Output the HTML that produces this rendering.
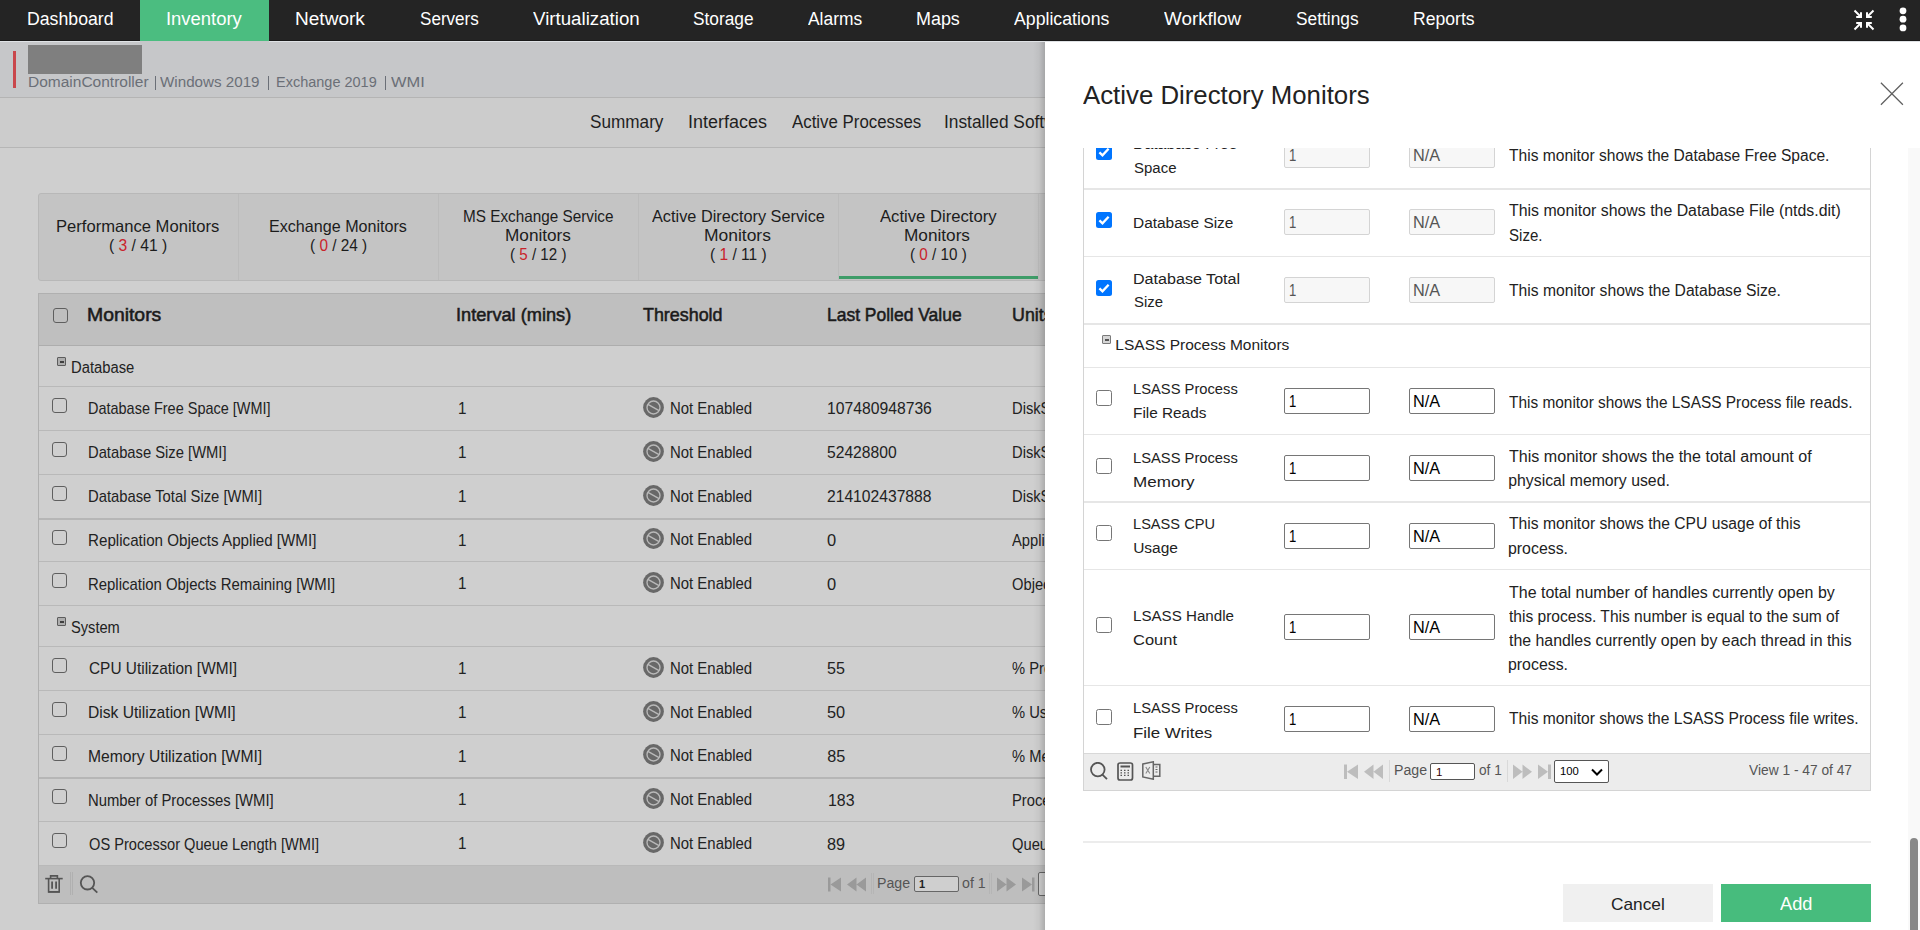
<!DOCTYPE html>
<html><head><meta charset="utf-8">
<style>
*{box-sizing:border-box;}
html,body{margin:0;padding:0;}
body{width:1920px;height:930px;overflow:hidden;position:relative;font-family:"Liberation Sans",sans-serif;background:#cfcfcf;}
.a{position:absolute;white-space:nowrap;}
</style></head><body>
<div class="a" style="left:0px;top:0px;width:1920px;height:41px;background:#242424"></div>
<div class="a" style="left:0px;top:40px;width:1920px;height:1px;background:#1a1a1a"></div>
<div class="a" style="left:140px;top:0px;width:129px;height:42px;background:#4bbd80"></div>
<div class="a" style="left:26.58px;top:8px;font-size:17.600px;line-height:23px;color:#fff;transform:scaleX(1.0058);transform-origin:0 0;">Dashboard</div>
<div class="a" style="left:166.34px;top:8px;font-size:17.600px;line-height:23px;color:#fff;transform:scaleX(1.0474);transform-origin:0 0;">Inventory</div>
<div class="a" style="left:295.48px;top:8px;font-size:17.600px;line-height:23px;color:#fff;transform:scaleX(1.0826);transform-origin:0 0;">Network</div>
<div class="a" style="left:419.63px;top:8px;font-size:17.600px;line-height:23px;color:#fff;transform:scaleX(0.9709);transform-origin:0 0;">Servers</div>
<div class="a" style="left:532.81px;top:8px;font-size:17.600px;line-height:23px;color:#fff;transform:scaleX(1.0628);transform-origin:0 0;">Virtualization</div>
<div class="a" style="left:692.72px;top:8px;font-size:17.600px;line-height:23px;color:#fff;transform:scaleX(0.9831);transform-origin:0 0;">Storage</div>
<div class="a" style="left:807.50px;top:8px;font-size:17.600px;line-height:23px;color:#fff;transform:scaleX(0.9885);transform-origin:0 0;">Alarms</div>
<div class="a" style="left:915.57px;top:8px;font-size:17.600px;line-height:23px;color:#fff;transform:scaleX(1.0181);transform-origin:0 0;">Maps</div>
<div class="a" style="left:1014.00px;top:8px;font-size:17.600px;line-height:23px;color:#fff;transform:scaleX(1.0053);transform-origin:0 0;">Applications</div>
<div class="a" style="left:1164.31px;top:8px;font-size:17.600px;line-height:23px;color:#fff;transform:scaleX(1.0711);transform-origin:0 0;">Workflow</div>
<div class="a" style="left:1295.92px;top:8px;font-size:17.600px;line-height:23px;color:#fff;transform:scaleX(0.9853);transform-origin:0 0;">Settings</div>
<div class="a" style="left:1412.99px;top:8px;font-size:17.600px;line-height:23px;color:#fff;">Reports</div>
<svg class="a" style="left:1852px;top:8px" width="24" height="24" viewBox="0 0 24 24" fill="none" stroke="#fff" stroke-width="2">
<path d="M2.5 2.5 L9 9 M9 4.2 V9 H4.2"/><path d="M21.5 2.5 L15 9 M15 4.2 V9 H19.8"/>
<path d="M2.5 21.5 L9 15 M9 19.8 V15 H4.2"/><path d="M21.5 21.5 L15 15 M15 19.8 V15 H19.8"/></svg>
<svg class="a" style="left:1897px;top:6px" width="12" height="28" viewBox="0 0 12 28" fill="#fff"><circle cx="6" cy="4.8" r="3.4"/><circle cx="6" cy="13.2" r="3.4"/><circle cx="6" cy="21.9" r="3.4"/></svg>
<div class="a" style="left:0px;top:41px;width:1920px;height:57px;background:#c6c7c9"></div>
<div class="a" style="left:0px;top:97px;width:1920px;height:1px;background:#b4b4b4"></div>
<div class="a" style="left:13px;top:51px;width:3px;height:37px;background:#c9474c"></div>
<div class="a" style="left:28px;top:45px;width:114px;height:29px;background:#7f7f7f"></div>
<div class="a" style="left:27.96px;top:73px;font-size:14.700px;line-height:19px;color:#6b6f77;transform:scaleX(1.0552);transform-origin:0 0;">DomainController</div>
<div class="a" style="left:155px;top:76px;width:1px;height:14px;background:#6b6f77"></div>
<div class="a" style="left:159.92px;top:73px;font-size:14.700px;line-height:19px;color:#6b6f77;transform:scaleX(1.0335);transform-origin:0 0;">Windows 2019</div>
<div class="a" style="left:268px;top:76px;width:1px;height:14px;background:#6b6f77"></div>
<div class="a" style="left:275.84px;top:73px;font-size:14.700px;line-height:19px;color:#6b6f77;transform:scaleX(0.9868);transform-origin:0 0;">Exchange 2019</div>
<div class="a" style="left:385px;top:76px;width:1px;height:14px;background:#6b6f77"></div>
<div class="a" style="left:390.72px;top:73px;font-size:14.700px;line-height:19px;color:#6b6f77;transform:scaleX(1.1204);transform-origin:0 0;">WMI</div>
<div class="a" style="left:0px;top:98px;width:1920px;height:49px;background:#cccccc"></div>
<div class="a" style="left:0px;top:147px;width:1920px;height:1px;background:#b6b6b6"></div>
<div class="a" style="left:590.23px;top:111px;font-size:17.500px;line-height:23px;color:#1f1f1f;transform:scaleX(0.9809);transform-origin:0 0;">Summary</div>
<div class="a" style="left:687.78px;top:111px;font-size:17.500px;line-height:23px;color:#1f1f1f;transform:scaleX(1.0263);transform-origin:0 0;">Interfaces</div>
<div class="a" style="left:791.70px;top:111px;font-size:17.500px;line-height:23px;color:#1f1f1f;transform:scaleX(0.9625);transform-origin:0 0;">Active Processes</div>
<div class="a" style="left:944.44px;top:111px;font-size:17.500px;line-height:23px;color:#1f1f1f;transform:scaleX(0.9901);transform-origin:0 0;">Installed Software</div>
<div class="a" style="left:38px;top:193px;width:1100px;height:88px;background:#c4c4c4;border:1px solid #b8b8b8;border-radius:3px"></div>
<div class="a" style="left:238px;top:194px;width:1px;height:86px;background:#bcbcbc"></div>
<div class="a" style="left:438px;top:194px;width:1px;height:86px;background:#bcbcbc"></div>
<div class="a" style="left:638px;top:194px;width:1px;height:86px;background:#bcbcbc"></div>
<div class="a" style="left:838px;top:194px;width:1px;height:86px;background:#bcbcbc"></div>
<div class="a" style="left:1038px;top:194px;width:1px;height:86px;background:#bcbcbc"></div>
<div class="a" style="left:56.07px;top:216px;font-size:16.500px;line-height:21px;color:#1c1c1c;transform:scaleX(1.0057);transform-origin:0 0;">Performance Monitors</div>
<div class="a" style="left:108.66px;top:235px;font-size:16.500px;line-height:21px;color:#1c1c1c;transform:scaleX(0.9461);transform-origin:0 0;">( <span style="color:#c9232b">3</span> / 41 )</div>
<div class="a" style="left:268.91px;top:216px;font-size:16.500px;line-height:21px;color:#1c1c1c;transform:scaleX(0.9764);transform-origin:0 0;">Exchange Monitors</div>
<div class="a" style="left:309.88px;top:235px;font-size:16.500px;line-height:21px;color:#1c1c1c;transform:scaleX(0.9293);transform-origin:0 0;">( <span style="color:#c9232b">0</span> / 24 )</div>
<div class="a" style="left:462.78px;top:206px;font-size:16.500px;line-height:21px;color:#1c1c1c;transform:scaleX(0.9269);transform-origin:0 0;">MS Exchange Service</div>
<div class="a" style="left:504.87px;top:225px;font-size:16.500px;line-height:21px;color:#1c1c1c;transform:scaleX(1.0419);transform-origin:0 0;">Monitors</div>
<div class="a" style="left:509.89px;top:244px;font-size:16.500px;line-height:21px;color:#1c1c1c;transform:scaleX(0.9192);transform-origin:0 0;">( <span style="color:#c9232b">5</span> / 12 )</div>
<div class="a" style="left:651.50px;top:206px;font-size:16.500px;line-height:21px;color:#1c1c1c;transform:scaleX(0.9874);transform-origin:0 0;">Active Directory Service</div>
<div class="a" style="left:704.20px;top:225px;font-size:16.500px;line-height:21px;color:#1c1c1c;transform:scaleX(1.0573);transform-origin:0 0;">Monitors</div>
<div class="a" style="left:709.57px;top:244px;font-size:16.500px;line-height:21px;color:#1c1c1c;transform:scaleX(0.9422);transform-origin:0 0;">( <span style="color:#c9232b">1</span> / 11 )</div>
<div class="a" style="left:879.50px;top:206px;font-size:16.500px;line-height:21px;color:#1c1c1c;transform:scaleX(1.0087);transform-origin:0 0;">Active Directory</div>
<div class="a" style="left:904.32px;top:225px;font-size:16.500px;line-height:21px;color:#1c1c1c;transform:scaleX(1.0427);transform-origin:0 0;">Monitors</div>
<div class="a" style="left:909.69px;top:244px;font-size:16.500px;line-height:21px;color:#1c1c1c;transform:scaleX(0.9226);transform-origin:0 0;">( <span style="color:#c9232b">0</span> / 10 )</div>
<div class="a" style="left:839px;top:276px;width:199px;height:3px;background:#3e9c68"></div>
<div class="a" style="left:38px;top:293px;width:1100px;height:611px;background:#cfcfcf;border:1px solid #b0b0b0"></div>
<div class="a" style="left:39px;top:294px;width:1100px;height:51px;background:#bfbfbf"></div>
<div class="a" style="left:39px;top:345px;width:1100px;height:1px;background:#adadad"></div>
<div class="a" style="left:53px;top:308px;width:15px;height:15px;border:1px solid #5f5f5f;border-radius:3px;background:#bfbfbf"></div>
<div class="a" style="left:87.45px;top:303px;font-size:18.400px;line-height:24px;color:#1b1b1b;transform:scaleX(1.0534);transform-origin:0 0;-webkit-text-stroke:0.55px #1b1b1b;">Monitors</div>
<div class="a" style="left:456.26px;top:303px;font-size:18.400px;line-height:24px;color:#1b1b1b;transform:scaleX(0.9893);transform-origin:0 0;-webkit-text-stroke:0.55px #1b1b1b;">Interval (mins)</div>
<div class="a" style="left:642.94px;top:303px;font-size:18.400px;line-height:24px;color:#1b1b1b;transform:scaleX(0.9723);transform-origin:0 0;-webkit-text-stroke:0.55px #1b1b1b;">Threshold</div>
<div class="a" style="left:826.60px;top:303px;font-size:18.400px;line-height:24px;color:#1b1b1b;transform:scaleX(0.9494);transform-origin:0 0;-webkit-text-stroke:0.55px #1b1b1b;">Last Polled Value</div>
<div class="a" style="left:1012.00px;top:303px;font-size:18.400px;line-height:24px;color:#1b1b1b;transform:scaleX(0.97);transform-origin:0 0;-webkit-text-stroke:0.55px #1b1b1b;">Units</div>
<div class="a" style="left:39px;top:386px;width:1100px;height:1px;background:#b9b9b9"></div>
<div class="a" style="left:57px;top:357px;width:9px;height:9px;border:1.6px solid #5c5c5c;border-radius:1px;background:#adadad"></div>
<div class="a" style="left:59.5px;top:361px;width:4px;height:1.5px;background:#3f3f3f"></div>
<div class="a" style="left:70.82px;top:357px;font-size:16.000px;line-height:21px;color:#222;transform:scaleX(0.9236);transform-origin:0 0;">Database</div>
<div class="a" style="left:39px;top:430px;width:1100px;height:1px;background:#b9b9b9"></div>
<div class="a" style="left:52px;top:398px;width:15px;height:15px;border:1px solid #5f5f5f;border-radius:3px;background:#cfcfcf"></div>
<div class="a" style="left:88.34px;top:398px;font-size:16.200px;line-height:21px;color:#222;transform:scaleX(0.8939);transform-origin:0 0;">Database Free Space [WMI]</div>
<div class="a" style="left:457.96px;top:398px;font-size:16.000px;line-height:21px;color:#222;transform:scaleX(0.9500);transform-origin:0 0;">1</div>
<svg class="a" style="left:642.9px;top:396.6px" width="21" height="21" viewBox="0 0 21 21"><circle cx="10.5" cy="10.5" r="10.4" fill="#686868"/><circle cx="10.5" cy="10.5" r="6.5" fill="none" stroke="#b9b9b9" stroke-width="1.35"/><path d="M4.9 7.3 L16.1 13.7" stroke="#b9b9b9" stroke-width="1.35"/></svg>
<div class="a" style="left:669.61px;top:398px;font-size:16.000px;line-height:21px;color:#222;transform:scaleX(0.9328);transform-origin:0 0;">Not Enabled</div>
<div class="a" style="left:826.92px;top:398px;font-size:16.200px;line-height:21px;color:#222;transform:scaleX(0.9706);transform-origin:0 0;">107480948736</div>
<div class="a" style="left:1012.40px;top:398px;font-size:16.000px;line-height:21px;color:#222;transform:scaleX(0.92);transform-origin:0 0;">DiskSpace</div>
<div class="a" style="left:39px;top:474px;width:1100px;height:1px;background:#b9b9b9"></div>
<div class="a" style="left:52px;top:442px;width:15px;height:15px;border:1px solid #5f5f5f;border-radius:3px;background:#cfcfcf"></div>
<div class="a" style="left:88.32px;top:442px;font-size:16.200px;line-height:21px;color:#222;transform:scaleX(0.9112);transform-origin:0 0;">Database Size [WMI]</div>
<div class="a" style="left:457.96px;top:442px;font-size:16.000px;line-height:21px;color:#222;transform:scaleX(0.9500);transform-origin:0 0;">1</div>
<svg class="a" style="left:642.9px;top:440.6px" width="21" height="21" viewBox="0 0 21 21"><circle cx="10.5" cy="10.5" r="10.4" fill="#686868"/><circle cx="10.5" cy="10.5" r="6.5" fill="none" stroke="#b9b9b9" stroke-width="1.35"/><path d="M4.9 7.3 L16.1 13.7" stroke="#b9b9b9" stroke-width="1.35"/></svg>
<div class="a" style="left:669.61px;top:442px;font-size:16.000px;line-height:21px;color:#222;transform:scaleX(0.9328);transform-origin:0 0;">Not Enabled</div>
<div class="a" style="left:827.47px;top:442px;font-size:16.200px;line-height:21px;color:#222;transform:scaleX(0.9665);transform-origin:0 0;">52428800</div>
<div class="a" style="left:1012.40px;top:442px;font-size:16.000px;line-height:21px;color:#222;transform:scaleX(0.92);transform-origin:0 0;">DiskSpace</div>
<div class="a" style="left:39px;top:518px;width:1100px;height:2px;background:#b6b6b6"></div>
<div class="a" style="left:52px;top:486px;width:15px;height:15px;border:1px solid #5f5f5f;border-radius:3px;background:#cfcfcf"></div>
<div class="a" style="left:88.32px;top:486px;font-size:16.200px;line-height:21px;color:#222;transform:scaleX(0.9140);transform-origin:0 0;">Database Total Size [WMI]</div>
<div class="a" style="left:457.96px;top:486px;font-size:16.000px;line-height:21px;color:#222;transform:scaleX(0.9500);transform-origin:0 0;">1</div>
<svg class="a" style="left:642.9px;top:484.6px" width="21" height="21" viewBox="0 0 21 21"><circle cx="10.5" cy="10.5" r="10.4" fill="#686868"/><circle cx="10.5" cy="10.5" r="6.5" fill="none" stroke="#b9b9b9" stroke-width="1.35"/><path d="M4.9 7.3 L16.1 13.7" stroke="#b9b9b9" stroke-width="1.35"/></svg>
<div class="a" style="left:669.61px;top:486px;font-size:16.000px;line-height:21px;color:#222;transform:scaleX(0.9328);transform-origin:0 0;">Not Enabled</div>
<div class="a" style="left:827.32px;top:486px;font-size:16.200px;line-height:21px;color:#222;transform:scaleX(0.9669);transform-origin:0 0;">214102437888</div>
<div class="a" style="left:1012.40px;top:486px;font-size:16.000px;line-height:21px;color:#222;transform:scaleX(0.92);transform-origin:0 0;">DiskSpace</div>
<div class="a" style="left:39px;top:561px;width:1100px;height:1px;background:#b9b9b9"></div>
<div class="a" style="left:52px;top:530px;width:15px;height:15px;border:1px solid #5f5f5f;border-radius:3px;background:#cfcfcf"></div>
<div class="a" style="left:88.29px;top:530px;font-size:16.200px;line-height:21px;color:#222;transform:scaleX(0.9369);transform-origin:0 0;">Replication Objects Applied [WMI]</div>
<div class="a" style="left:457.96px;top:530px;font-size:16.000px;line-height:21px;color:#222;transform:scaleX(0.9500);transform-origin:0 0;">1</div>
<svg class="a" style="left:642.9px;top:528.1px" width="21" height="21" viewBox="0 0 21 21"><circle cx="10.5" cy="10.5" r="10.4" fill="#686868"/><circle cx="10.5" cy="10.5" r="6.5" fill="none" stroke="#b9b9b9" stroke-width="1.35"/><path d="M4.9 7.3 L16.1 13.7" stroke="#b9b9b9" stroke-width="1.35"/></svg>
<div class="a" style="left:669.61px;top:529px;font-size:16.000px;line-height:21px;color:#222;transform:scaleX(0.9328);transform-origin:0 0;">Not Enabled</div>
<div class="a" style="left:827.44px;top:530px;font-size:16.200px;line-height:21px;color:#222;transform:scaleX(1.0159);transform-origin:0 0;">0</div>
<div class="a" style="left:1012.40px;top:530px;font-size:16.000px;line-height:21px;color:#222;transform:scaleX(0.92);transform-origin:0 0;">Applied</div>
<div class="a" style="left:39px;top:605px;width:1100px;height:1px;background:#b9b9b9"></div>
<div class="a" style="left:52px;top:573px;width:15px;height:15px;border:1px solid #5f5f5f;border-radius:3px;background:#cfcfcf"></div>
<div class="a" style="left:88.31px;top:574px;font-size:16.200px;line-height:21px;color:#222;transform:scaleX(0.9216);transform-origin:0 0;">Replication Objects Remaining [WMI]</div>
<div class="a" style="left:457.96px;top:573px;font-size:16.000px;line-height:21px;color:#222;transform:scaleX(0.9500);transform-origin:0 0;">1</div>
<svg class="a" style="left:642.9px;top:571.6px" width="21" height="21" viewBox="0 0 21 21"><circle cx="10.5" cy="10.5" r="10.4" fill="#686868"/><circle cx="10.5" cy="10.5" r="6.5" fill="none" stroke="#b9b9b9" stroke-width="1.35"/><path d="M4.9 7.3 L16.1 13.7" stroke="#b9b9b9" stroke-width="1.35"/></svg>
<div class="a" style="left:669.61px;top:573px;font-size:16.000px;line-height:21px;color:#222;transform:scaleX(0.9328);transform-origin:0 0;">Not Enabled</div>
<div class="a" style="left:827.44px;top:574px;font-size:16.200px;line-height:21px;color:#222;transform:scaleX(1.0159);transform-origin:0 0;">0</div>
<div class="a" style="left:1012.40px;top:574px;font-size:16.000px;line-height:21px;color:#222;transform:scaleX(0.92);transform-origin:0 0;">Objects</div>
<div class="a" style="left:39px;top:646px;width:1100px;height:1px;background:#b9b9b9"></div>
<div class="a" style="left:57px;top:617px;width:9px;height:9px;border:1.6px solid #5c5c5c;border-radius:1px;background:#adadad"></div>
<div class="a" style="left:59.5px;top:621px;width:4px;height:1.5px;background:#3f3f3f"></div>
<div class="a" style="left:70.74px;top:617px;font-size:16.000px;line-height:21px;color:#222;transform:scaleX(0.9147);transform-origin:0 0;">System</div>
<div class="a" style="left:39px;top:690px;width:1100px;height:1px;background:#b9b9b9"></div>
<div class="a" style="left:52px;top:658px;width:15px;height:15px;border:1px solid #5f5f5f;border-radius:3px;background:#cfcfcf"></div>
<div class="a" style="left:88.73px;top:658px;font-size:16.200px;line-height:21px;color:#222;transform:scaleX(0.9516);transform-origin:0 0;">CPU Utilization [WMI]</div>
<div class="a" style="left:457.96px;top:658px;font-size:16.000px;line-height:21px;color:#222;transform:scaleX(0.9500);transform-origin:0 0;">1</div>
<svg class="a" style="left:642.9px;top:656.6px" width="21" height="21" viewBox="0 0 21 21"><circle cx="10.5" cy="10.5" r="10.4" fill="#686868"/><circle cx="10.5" cy="10.5" r="6.5" fill="none" stroke="#b9b9b9" stroke-width="1.35"/><path d="M4.9 7.3 L16.1 13.7" stroke="#b9b9b9" stroke-width="1.35"/></svg>
<div class="a" style="left:669.61px;top:658px;font-size:16.000px;line-height:21px;color:#222;transform:scaleX(0.9328);transform-origin:0 0;">Not Enabled</div>
<div class="a" style="left:827.46px;top:658px;font-size:16.200px;line-height:21px;color:#222;transform:scaleX(0.9948);transform-origin:0 0;">55</div>
<div class="a" style="left:1012.40px;top:658px;font-size:16.000px;line-height:21px;color:#222;transform:scaleX(0.92);transform-origin:0 0;">% Processor</div>
<div class="a" style="left:39px;top:734px;width:1100px;height:1px;background:#b9b9b9"></div>
<div class="a" style="left:52px;top:702px;width:15px;height:15px;border:1px solid #5f5f5f;border-radius:3px;background:#cfcfcf"></div>
<div class="a" style="left:88.25px;top:702px;font-size:16.200px;line-height:21px;color:#222;transform:scaleX(0.9656);transform-origin:0 0;">Disk Utilization [WMI]</div>
<div class="a" style="left:457.96px;top:702px;font-size:16.000px;line-height:21px;color:#222;transform:scaleX(0.9500);transform-origin:0 0;">1</div>
<svg class="a" style="left:642.9px;top:700.6px" width="21" height="21" viewBox="0 0 21 21"><circle cx="10.5" cy="10.5" r="10.4" fill="#686868"/><circle cx="10.5" cy="10.5" r="6.5" fill="none" stroke="#b9b9b9" stroke-width="1.35"/><path d="M4.9 7.3 L16.1 13.7" stroke="#b9b9b9" stroke-width="1.35"/></svg>
<div class="a" style="left:669.61px;top:702px;font-size:16.000px;line-height:21px;color:#222;transform:scaleX(0.9328);transform-origin:0 0;">Not Enabled</div>
<div class="a" style="left:827.45px;top:702px;font-size:16.200px;line-height:21px;color:#222;transform:scaleX(1.0079);transform-origin:0 0;">50</div>
<div class="a" style="left:1012.40px;top:702px;font-size:16.000px;line-height:21px;color:#222;transform:scaleX(0.92);transform-origin:0 0;">% Used</div>
<div class="a" style="left:39px;top:777px;width:1100px;height:2px;background:#b6b6b6"></div>
<div class="a" style="left:52px;top:746px;width:15px;height:15px;border:1px solid #5f5f5f;border-radius:3px;background:#cfcfcf"></div>
<div class="a" style="left:88.25px;top:746px;font-size:16.200px;line-height:21px;color:#222;transform:scaleX(0.9682);transform-origin:0 0;">Memory Utilization [WMI]</div>
<div class="a" style="left:457.96px;top:746px;font-size:16.000px;line-height:21px;color:#222;transform:scaleX(0.9500);transform-origin:0 0;">1</div>
<svg class="a" style="left:642.9px;top:744.1px" width="21" height="21" viewBox="0 0 21 21"><circle cx="10.5" cy="10.5" r="10.4" fill="#686868"/><circle cx="10.5" cy="10.5" r="6.5" fill="none" stroke="#b9b9b9" stroke-width="1.35"/><path d="M4.9 7.3 L16.1 13.7" stroke="#b9b9b9" stroke-width="1.35"/></svg>
<div class="a" style="left:669.61px;top:745px;font-size:16.000px;line-height:21px;color:#222;transform:scaleX(0.9328);transform-origin:0 0;">Not Enabled</div>
<div class="a" style="left:827.37px;top:746px;font-size:16.200px;line-height:21px;color:#222;">85</div>
<div class="a" style="left:1012.40px;top:746px;font-size:16.000px;line-height:21px;color:#222;transform:scaleX(0.92);transform-origin:0 0;">% Memory</div>
<div class="a" style="left:39px;top:821px;width:1100px;height:1px;background:#b9b9b9"></div>
<div class="a" style="left:52px;top:789px;width:15px;height:15px;border:1px solid #5f5f5f;border-radius:3px;background:#cfcfcf"></div>
<div class="a" style="left:88.31px;top:790px;font-size:16.200px;line-height:21px;color:#222;transform:scaleX(0.9172);transform-origin:0 0;">Number of Processes [WMI]</div>
<div class="a" style="left:457.96px;top:789px;font-size:16.000px;line-height:21px;color:#222;transform:scaleX(0.9500);transform-origin:0 0;">1</div>
<svg class="a" style="left:642.9px;top:787.6px" width="21" height="21" viewBox="0 0 21 21"><circle cx="10.5" cy="10.5" r="10.4" fill="#686868"/><circle cx="10.5" cy="10.5" r="6.5" fill="none" stroke="#b9b9b9" stroke-width="1.35"/><path d="M4.9 7.3 L16.1 13.7" stroke="#b9b9b9" stroke-width="1.35"/></svg>
<div class="a" style="left:669.61px;top:789px;font-size:16.000px;line-height:21px;color:#222;transform:scaleX(0.9328);transform-origin:0 0;">Not Enabled</div>
<div class="a" style="left:827.60px;top:790px;font-size:16.200px;line-height:21px;color:#222;transform:scaleX(0.9837);transform-origin:0 0;">183</div>
<div class="a" style="left:1012.40px;top:790px;font-size:16.000px;line-height:21px;color:#222;transform:scaleX(0.92);transform-origin:0 0;">Processes</div>
<div class="a" style="left:39px;top:865px;width:1100px;height:1px;background:#b9b9b9"></div>
<div class="a" style="left:52px;top:833px;width:15px;height:15px;border:1px solid #5f5f5f;border-radius:3px;background:#cfcfcf"></div>
<div class="a" style="left:88.84px;top:834px;font-size:16.200px;line-height:21px;color:#222;transform:scaleX(0.9036);transform-origin:0 0;">OS Processor Queue Length [WMI]</div>
<div class="a" style="left:457.96px;top:833px;font-size:16.000px;line-height:21px;color:#222;transform:scaleX(0.9500);transform-origin:0 0;">1</div>
<svg class="a" style="left:642.9px;top:831.6px" width="21" height="21" viewBox="0 0 21 21"><circle cx="10.5" cy="10.5" r="10.4" fill="#686868"/><circle cx="10.5" cy="10.5" r="6.5" fill="none" stroke="#b9b9b9" stroke-width="1.35"/><path d="M4.9 7.3 L16.1 13.7" stroke="#b9b9b9" stroke-width="1.35"/></svg>
<div class="a" style="left:669.61px;top:833px;font-size:16.000px;line-height:21px;color:#222;transform:scaleX(0.9328);transform-origin:0 0;">Not Enabled</div>
<div class="a" style="left:827.37px;top:834px;font-size:16.200px;line-height:21px;color:#222;transform:scaleX(1.0046);transform-origin:0 0;">89</div>
<div class="a" style="left:1012.40px;top:834px;font-size:16.000px;line-height:21px;color:#222;transform:scaleX(0.92);transform-origin:0 0;">Queue</div>
<div class="a" style="left:39px;top:866px;width:1100px;height:37px;background:#bebebe"></div>
<svg class="a" style="left:44px;top:874px" width="20" height="20" viewBox="0 0 20 20" fill="none" stroke="#555" stroke-width="1.6"><path d="M1.2 4.6 H18.7"/><path d="M6.6 4.4 V1.9 H13.4 V4.4"/><path d="M4.6 5 V17.9 H15.2 V5"/><path d="M4.2 18 H15.6" stroke-width="1.2"/><path d="M8.1 7.6 V14.8 M12.1 7.6 V14.8" stroke-width="1.8"/></svg>
<div class="a" style="left:70px;top:872px;width:1px;height:23px;background:#b0b0b0"></div>
<div class="a" style="left:72px;top:872px;width:1px;height:23px;background:#b0b0b0"></div>
<svg class="a" style="left:78px;top:874px" width="22" height="22" viewBox="0 0 22 22" fill="none" stroke="#555" stroke-width="1.8"><circle cx="9.5" cy="8.8" r="6.7"/><path d="M14.3 13.8 L19.3 18.6"/></svg>
<svg class="a" style="left:828px;top:876.5px" width="40" height="15" viewBox="0 0 40 15" fill="#9a9a9a"><rect x="0" y="0.5" width="2.5" height="14"/><path d="M2.5 7.5 L13 0.5 V14.5Z"/><path d="M19 7.5 L28.5 0.5 V14.5Z M28.5 7.5 L38 0.5 V14.5Z"/></svg>
<div class="a" style="left:871px;top:873px;width:1px;height:21px;background:#b5b5b5"></div>
<div class="a" style="left:873px;top:873px;width:1px;height:21px;background:#b5b5b5"></div>
<div class="a" style="left:876.87px;top:874px;font-size:14.000px;line-height:18px;color:#555;transform:scaleX(1.0116);transform-origin:0 0;">Page</div>
<div class="a" style="left:914px;top:876px;width:45px;height:16px;border:1px solid #666;border-radius:2px;background:#cfcfcf"></div>
<div class="a" style="left:919.00px;top:877px;font-size:11.000px;line-height:14px;color:#222;font-weight:bold;">1</div>
<div class="a" style="left:962.03px;top:874px;font-size:14.000px;line-height:18px;color:#555;transform:scaleX(1.0127);transform-origin:0 0;">of 1</div>
<div class="a" style="left:989px;top:873px;width:1px;height:21px;background:#b5b5b5"></div>
<div class="a" style="left:991px;top:873px;width:1px;height:21px;background:#b5b5b5"></div>
<svg class="a" style="left:996.5px;top:876.5px" width="40" height="15" viewBox="0 0 40 15" fill="#9a9a9a"><path d="M0 0.5 L9.5 7.5 L0 14.5Z M9.5 0.5 L19 7.5 L9.5 14.5Z"/><path d="M25 0.5 L35 7.5 L25 14.5Z"/><rect x="35" y="0.5" width="2.5" height="14"/></svg>
<div class="a" style="left:1038px;top:872px;width:30px;height:24px;border:1px solid #666;border-radius:2px;background:#cfcfcf"></div>
<div class="a" style="left:1033px;top:41px;width:12px;height:889px;background:linear-gradient(to right,rgba(0,0,0,0) 0%,rgba(0,0,0,0.04) 50%,rgba(0,0,0,0.17) 100%)"></div>
<div class="a" style="left:1045px;top:41px;width:875px;height:889px;background:#fff"></div>
<div class="a" style="left:0px;top:41px;width:140px;height:1px;background:#dfe2e5"></div>
<div class="a" style="left:269px;top:41px;width:1651px;height:1px;background:#dfe2e5"></div>
<div class="a" style="left:1082.80px;top:79px;font-size:25.700px;line-height:33px;color:#222;transform:scaleX(1.0042);transform-origin:0 0;">Active Directory Monitors</div>
<svg class="a" style="left:1880px;top:82px" width="24" height="24" viewBox="0 0 24 24" stroke="#5f5f5f" stroke-width="1.25"><path d="M0.9 0.7 L22.9 22.7 M22.9 0.7 L0.9 22.7"/></svg>
<div class="a" style="left:1908px;top:148px;width:12px;height:782px;background:#f9f9f9"></div>
<div class="a" style="left:1910px;top:838px;width:8px;height:100px;background:#888;border-radius:4px"></div>
<div class="a" style="left:1045px;top:148px;width:863px;height:782px;overflow:hidden">
<div class="a" style="left:38px;top:-48px;width:1px;height:691px;background:#d4d4d4"></div>
<div class="a" style="left:825px;top:-48px;width:1px;height:691px;background:#d4d4d4"></div>
<div class="a" style="left:39px;top:40px;width:786px;height:2px;background:#e6e6e6"></div>
<div class="a" style="left:51px;top:-4px;width:16px;height:16px;background:#0075ff;border-radius:2.5px"><svg width="16" height="16" viewBox="0 0 16 16" style="position:absolute;left:0;top:0"><path d="M3.4 8.3 L6.5 11.3 L12.6 4.7" fill="none" stroke="#fff" stroke-width="2.3"/></svg></div>
<div class="a" style="left:88.03px;top:-14px;font-size:15.500px;line-height:20px;color:#222;transform:scaleX(1.0209);transform-origin:0 0;">Database Free</div>
<div class="a" style="left:88.63px;top:10px;font-size:15.500px;line-height:20px;color:#222;transform:scaleX(0.9660);transform-origin:0 0;">Space</div>
<div class="a" style="left:239px;top:-6px;width:86px;height:26px;border:1px solid #d4d4d4;border-radius:2px;background:#f7f7f7"></div>
<div class="a" style="left:364px;top:-6px;width:86px;height:26px;border:1px solid #d4d4d4;border-radius:2px;background:#f7f7f7"></div>
<div class="a" style="left:244.32px;top:-3px;font-size:16.000px;line-height:21px;color:#555;transform:scaleX(0.8190);transform-origin:0 0;">1</div>
<div class="a" style="left:368.30px;top:-3px;font-size:16.000px;line-height:21px;color:#555;transform:scaleX(1.0174);transform-origin:0 0;">N/A</div>
<div class="a" style="left:463.99px;top:-3px;font-size:15.800px;line-height:21px;color:#222;transform:scaleX(0.9864);transform-origin:0 0;">This monitor shows the Database Free Space.</div>
<div class="a" style="left:39px;top:108px;width:786px;height:1px;background:#e6e6e6"></div>
<div class="a" style="left:51px;top:64px;width:16px;height:16px;background:#0075ff;border-radius:2.5px"><svg width="16" height="16" viewBox="0 0 16 16" style="position:absolute;left:0;top:0"><path d="M3.4 8.3 L6.5 11.3 L12.6 4.7" fill="none" stroke="#fff" stroke-width="2.3"/></svg></div>
<div class="a" style="left:88.06px;top:65px;font-size:15.500px;line-height:20px;color:#222;transform:scaleX(0.9961);transform-origin:0 0;">Database Size</div>
<div class="a" style="left:239px;top:61px;width:86px;height:26px;border:1px solid #d4d4d4;border-radius:2px;background:#f7f7f7"></div>
<div class="a" style="left:364px;top:61px;width:86px;height:26px;border:1px solid #d4d4d4;border-radius:2px;background:#f7f7f7"></div>
<div class="a" style="left:244.32px;top:64px;font-size:16.000px;line-height:21px;color:#555;transform:scaleX(0.8190);transform-origin:0 0;">1</div>
<div class="a" style="left:368.30px;top:64px;font-size:16.000px;line-height:21px;color:#555;transform:scaleX(1.0174);transform-origin:0 0;">N/A</div>
<div class="a" style="left:463.98px;top:52px;font-size:15.800px;line-height:21px;color:#222;transform:scaleX(1.0049);transform-origin:0 0;">This monitor shows the Database File (ntds.dit)</div>
<div class="a" style="left:463.62px;top:77px;font-size:15.800px;line-height:21px;color:#222;transform:scaleX(0.9532);transform-origin:0 0;">Size.</div>
<div class="a" style="left:39px;top:175px;width:786px;height:2px;background:#e6e6e6"></div>
<div class="a" style="left:51px;top:132px;width:16px;height:16px;background:#0075ff;border-radius:2.5px"><svg width="16" height="16" viewBox="0 0 16 16" style="position:absolute;left:0;top:0"><path d="M3.4 8.3 L6.5 11.3 L12.6 4.7" fill="none" stroke="#fff" stroke-width="2.3"/></svg></div>
<div class="a" style="left:88.01px;top:121px;font-size:15.500px;line-height:20px;color:#222;transform:scaleX(1.0384);transform-origin:0 0;">Database Total</div>
<div class="a" style="left:88.63px;top:144px;font-size:15.500px;line-height:20px;color:#222;transform:scaleX(0.9599);transform-origin:0 0;">Size</div>
<div class="a" style="left:239px;top:129px;width:86px;height:26px;border:1px solid #d4d4d4;border-radius:2px;background:#f7f7f7"></div>
<div class="a" style="left:364px;top:129px;width:86px;height:26px;border:1px solid #d4d4d4;border-radius:2px;background:#f7f7f7"></div>
<div class="a" style="left:244.32px;top:132px;font-size:16.000px;line-height:21px;color:#555;transform:scaleX(0.8190);transform-origin:0 0;">1</div>
<div class="a" style="left:368.30px;top:132px;font-size:16.000px;line-height:21px;color:#555;transform:scaleX(1.0174);transform-origin:0 0;">N/A</div>
<div class="a" style="left:463.99px;top:132px;font-size:15.800px;line-height:21px;color:#222;transform:scaleX(0.9925);transform-origin:0 0;">This monitor shows the Database Size.</div>
<div class="a" style="left:39px;top:219px;width:786px;height:1px;background:#e6e6e6"></div>
<div class="a" style="left:39px;top:286px;width:786px;height:1px;background:#e6e6e6"></div>
<div class="a" style="left:51px;top:242px;width:16px;height:16px;border:1px solid #767676;border-radius:2.5px;background:#fff"></div>
<div class="a" style="left:88.12px;top:231px;font-size:15.500px;line-height:20px;color:#222;transform:scaleX(0.9502);transform-origin:0 0;">LSASS Process</div>
<div class="a" style="left:88.07px;top:255px;font-size:15.500px;line-height:20px;color:#222;transform:scaleX(0.9902);transform-origin:0 0;">File Reads</div>
<div class="a" style="left:239px;top:240px;width:86px;height:26px;border:1px solid #767676;border-radius:2px;background:#fff"></div>
<div class="a" style="left:364px;top:240px;width:86px;height:26px;border:1px solid #767676;border-radius:2px;background:#fff"></div>
<div class="a" style="left:244.32px;top:243px;font-size:16.000px;line-height:21px;color:#000;transform:scaleX(0.8190);transform-origin:0 0;">1</div>
<div class="a" style="left:368.30px;top:243px;font-size:16.000px;line-height:21px;color:#000;transform:scaleX(1.0174);transform-origin:0 0;">N/A</div>
<div class="a" style="left:463.99px;top:244px;font-size:15.800px;line-height:21px;color:#222;transform:scaleX(0.9758);transform-origin:0 0;">This monitor shows the LSASS Process file reads.</div>
<div class="a" style="left:39px;top:353px;width:786px;height:2px;background:#e6e6e6"></div>
<div class="a" style="left:51px;top:310px;width:16px;height:16px;border:1px solid #767676;border-radius:2.5px;background:#fff"></div>
<div class="a" style="left:88.12px;top:300px;font-size:15.500px;line-height:20px;color:#222;transform:scaleX(0.9502);transform-origin:0 0;">LSASS Process</div>
<div class="a" style="left:87.94px;top:324px;font-size:15.500px;line-height:20px;color:#222;transform:scaleX(1.1002);transform-origin:0 0;">Memory</div>
<div class="a" style="left:239px;top:307px;width:86px;height:26px;border:1px solid #767676;border-radius:2px;background:#fff"></div>
<div class="a" style="left:364px;top:307px;width:86px;height:26px;border:1px solid #767676;border-radius:2px;background:#fff"></div>
<div class="a" style="left:244.32px;top:310px;font-size:16.000px;line-height:21px;color:#000;transform:scaleX(0.8190);transform-origin:0 0;">1</div>
<div class="a" style="left:368.30px;top:310px;font-size:16.000px;line-height:21px;color:#000;transform:scaleX(1.0174);transform-origin:0 0;">N/A</div>
<div class="a" style="left:463.98px;top:298px;font-size:15.800px;line-height:21px;color:#222;transform:scaleX(1.0169);transform-origin:0 0;">This monitor shows the the total amount of</div>
<div class="a" style="left:463.28px;top:322px;font-size:15.800px;line-height:21px;color:#222;">physical memory used.</div>
<div class="a" style="left:39px;top:421px;width:786px;height:1px;background:#e6e6e6"></div>
<div class="a" style="left:51px;top:377px;width:16px;height:16px;border:1px solid #767676;border-radius:2.5px;background:#fff"></div>
<div class="a" style="left:88.13px;top:366px;font-size:15.500px;line-height:20px;color:#222;transform:scaleX(0.9426);transform-origin:0 0;">LSASS CPU</div>
<div class="a" style="left:88.14px;top:390px;font-size:15.500px;line-height:20px;color:#222;">Usage</div>
<div class="a" style="left:239px;top:375px;width:86px;height:26px;border:1px solid #767676;border-radius:2px;background:#fff"></div>
<div class="a" style="left:364px;top:375px;width:86px;height:26px;border:1px solid #767676;border-radius:2px;background:#fff"></div>
<div class="a" style="left:244.32px;top:378px;font-size:16.000px;line-height:21px;color:#000;transform:scaleX(0.8190);transform-origin:0 0;">1</div>
<div class="a" style="left:368.30px;top:378px;font-size:16.000px;line-height:21px;color:#000;transform:scaleX(1.0174);transform-origin:0 0;">N/A</div>
<div class="a" style="left:463.99px;top:365px;font-size:15.800px;line-height:21px;color:#222;transform:scaleX(0.9910);transform-origin:0 0;">This monitor shows the CPU usage of this</div>
<div class="a" style="left:463.27px;top:390px;font-size:15.800px;line-height:21px;color:#222;transform:scaleX(1.0053);transform-origin:0 0;">process.</div>
<div class="a" style="left:39px;top:537px;width:786px;height:1px;background:#e6e6e6"></div>
<div class="a" style="left:51px;top:469px;width:16px;height:16px;border:1px solid #767676;border-radius:2.5px;background:#fff"></div>
<div class="a" style="left:88.09px;top:458px;font-size:15.500px;line-height:20px;color:#222;transform:scaleX(0.9759);transform-origin:0 0;">LSASS Handle</div>
<div class="a" style="left:88.48px;top:482px;font-size:15.500px;line-height:20px;color:#222;transform:scaleX(1.0629);transform-origin:0 0;">Count</div>
<div class="a" style="left:239px;top:466px;width:86px;height:26px;border:1px solid #767676;border-radius:2px;background:#fff"></div>
<div class="a" style="left:364px;top:466px;width:86px;height:26px;border:1px solid #767676;border-radius:2px;background:#fff"></div>
<div class="a" style="left:244.32px;top:469px;font-size:16.000px;line-height:21px;color:#000;transform:scaleX(0.8190);transform-origin:0 0;">1</div>
<div class="a" style="left:368.30px;top:469px;font-size:16.000px;line-height:21px;color:#000;transform:scaleX(1.0174);transform-origin:0 0;">N/A</div>
<div class="a" style="left:463.98px;top:434px;font-size:15.800px;line-height:21px;color:#222;transform:scaleX(1.0109);transform-origin:0 0;">The total number of handles currently open by</div>
<div class="a" style="left:464.07px;top:458px;font-size:15.800px;line-height:21px;color:#222;transform:scaleX(0.9849);transform-origin:0 0;">this process. This number is equal to the sum of</div>
<div class="a" style="left:464.06px;top:482px;font-size:15.800px;line-height:21px;color:#222;transform:scaleX(1.0055);transform-origin:0 0;">the handles currently open by each thread in this</div>
<div class="a" style="left:463.27px;top:506px;font-size:15.800px;line-height:21px;color:#222;transform:scaleX(1.0053);transform-origin:0 0;">process.</div>
<div class="a" style="left:57px;top:187px;width:9px;height:9px;border:1.6px solid #7a7a7a;border-radius:1px;background:#d6d6d6"></div>
<div class="a" style="left:59.5px;top:191px;width:4px;height:1.5px;background:#555"></div>
<div class="a" style="left:70.36px;top:187px;font-size:15.500px;line-height:20px;color:#222;">LSASS Process Monitors</div>
<div class="a" style="left:51px;top:561px;width:16px;height:16px;border:1px solid #767676;border-radius:2.5px;background:#fff"></div>
<div class="a" style="left:88.12px;top:550px;font-size:15.500px;line-height:20px;color:#222;transform:scaleX(0.9502);transform-origin:0 0;">LSASS Process</div>
<div class="a" style="left:87.95px;top:575px;font-size:15.500px;line-height:20px;color:#222;transform:scaleX(1.0865);transform-origin:0 0;">File Writes</div>
<div class="a" style="left:239px;top:558px;width:86px;height:26px;border:1px solid #767676;border-radius:2px;background:#fff"></div>
<div class="a" style="left:364px;top:558px;width:86px;height:26px;border:1px solid #767676;border-radius:2px;background:#fff"></div>
<div class="a" style="left:244.32px;top:561px;font-size:16.000px;line-height:21px;color:#000;transform:scaleX(0.8190);transform-origin:0 0;">1</div>
<div class="a" style="left:368.30px;top:561px;font-size:16.000px;line-height:21px;color:#000;transform:scaleX(1.0174);transform-origin:0 0;">N/A</div>
<div class="a" style="left:463.69px;top:560px;font-size:15.800px;line-height:21px;color:#222;transform:scaleX(0.9881);transform-origin:0 0;">This monitor shows the LSASS Process file writes.</div>
<div class="a" style="left:39px;top:605px;width:786px;height:1px;background:#d8d8d8"></div>
<div class="a" style="left:39px;top:606px;width:786px;height:36px;background:#ececec"></div>
<div class="a" style="left:38px;top:642px;width:788px;height:1px;background:#d4d4d4"></div>
<svg class="a" style="left:45px;top:614px" width="20" height="20" viewBox="0 0 20 20" fill="none" stroke="#555" stroke-width="1.8"><circle cx="7.8" cy="7.6" r="6.8"/><path d="M12.4 12.6 L17 17.2"/></svg>
<svg class="a" style="left:72px;top:614px" width="17" height="19" viewBox="0 0 17 19" fill="none" stroke="#555"><rect x="1" y="1" width="14.5" height="17" rx="2" stroke-width="1.7"/><path d="M3.5 4.5 H13" stroke-width="2"/><path d="M3.5 8.3 H5 M7 8.3 H8.5 M10.5 8.3 H12 M3.5 10.8 H5 M7 10.8 H8.5 M10.5 10.8 H12 M3.5 13.3 H5 M7 13.3 H8.5 M10.5 13.3 H12" stroke-width="1.2"/></svg>
<svg class="a" style="left:97px;top:613px" width="19" height="19" viewBox="0 0 19 19" fill="none" stroke="#666"><path d="M0.8 3 L11.3 0.8 V18.2 L0.8 16Z" stroke-width="1.5"/><path d="M11.3 3.5 H17.8 V15.2 H11.3" stroke-width="1.5"/><path d="M3.8 6 L7.8 12.5 M7.8 6 L3.8 12.5" stroke-width="1.1" stroke="#888"/><path d="M13.5 6 H15.5 M13.5 8.5 H15.5 M13.5 11 H15.5" stroke-width="1"/></svg>
<svg class="a" style="left:299px;top:616px" width="40" height="16" viewBox="0 0 40 16" fill="#bdbdbd"><rect x="0" y="0.5" width="3" height="14.5"/><path d="M3 7.8 L14 0.5 V15Z"/><path d="M20 7.8 L29.5 0.5 V15Z M29.5 7.8 L39 0.5 V15Z"/></svg>
<div class="a" style="left:344px;top:612px;width:1px;height:22px;background:#d9d9d9"></div>
<div class="a" style="left:348.67px;top:613px;font-size:14.000px;line-height:18px;color:#555;transform:scaleX(1.0116);transform-origin:0 0;">Page</div>
<div class="a" style="left:385px;top:615px;width:45px;height:17px;border:1px solid #555;border-radius:2px;background:#fff"></div>
<div class="a" style="left:391.00px;top:617px;font-size:11.500px;line-height:15px;color:#300;">1</div>
<div class="a" style="left:433.85px;top:613px;font-size:14.000px;line-height:18px;color:#555;transform:scaleX(0.9765);transform-origin:0 0;">of 1</div>
<div class="a" style="left:462px;top:612px;width:1px;height:22px;background:#d9d9d9"></div>
<svg class="a" style="left:468px;top:616px" width="40" height="16" viewBox="0 0 40 16" fill="#bdbdbd"><path d="M0 0.5 L9.5 7.8 L0 15Z M9.5 0.5 L19 7.8 L9.5 15Z"/><path d="M25 0.5 L35 7.8 L25 15Z"/><rect x="35" y="0.5" width="3" height="14.5"/></svg>
<div class="a" style="left:509px;top:612px;width:55px;height:23px;border:1px solid #555;border-radius:2px;background:#fff"></div>
<div class="a" style="left:514.91px;top:616px;font-size:11.500px;line-height:15px;color:#000;transform:scaleX(0.9786);transform-origin:0 0;">100</div>
<svg class="a" style="left:546px;top:620px" width="12" height="8" viewBox="0 0 12 8" fill="none" stroke="#000" stroke-width="2"><path d="M1 1.5 L6 6.5 L11 1.5"/></svg>
<div class="a" style="left:703.93px;top:613px;font-size:14.000px;line-height:18px;color:#555;transform:scaleX(0.9830);transform-origin:0 0;">View 1 - 47 of 47</div>
<div class="a" style="left:38px;top:693px;width:788px;height:2px;background:#ececec"></div>
<div class="a" style="left:518px;top:736px;width:150px;height:38px;background:#f0f0f0"></div>
<div class="a" style="left:676px;top:736px;width:150px;height:38px;background:#47bc7d"></div>
<div class="a" style="left:566.14px;top:746px;font-size:17.000px;line-height:22px;color:#222;transform:scaleX(1.0164);transform-origin:0 0;">Cancel</div>
<div class="a" style="left:735.00px;top:745px;font-size:17.500px;line-height:23px;color:#fff;transform:scaleX(1.0412);transform-origin:0 0;">Add</div>
</div>
</body></html>
